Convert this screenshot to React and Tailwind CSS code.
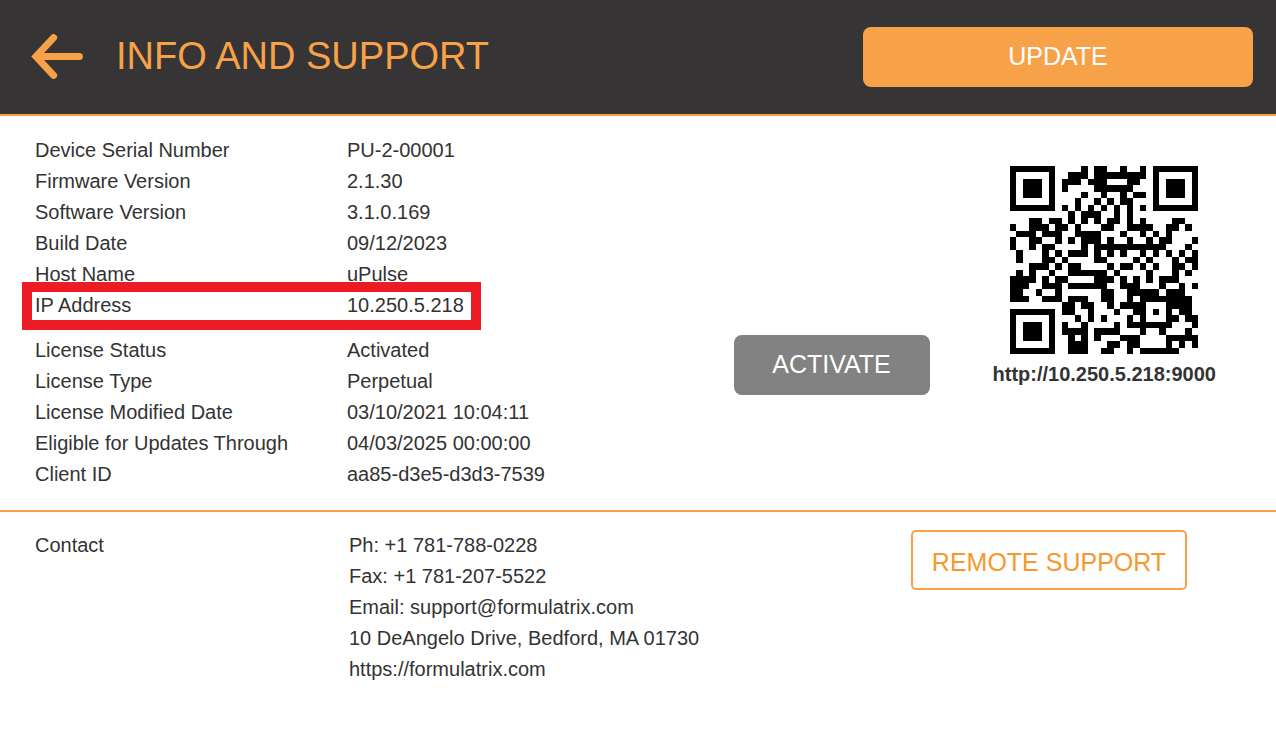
import clsx from 'clsx'

const DEVICE_URL = 'http://10.250.5.218:9000'

const deviceInfo = [
  ['Device Serial Number', 'PU-2-00001'],
  ['Firmware Version', '2.1.30'],
  ['Software Version', '3.1.0.169'],
  ['Build Date', '09/12/2023'],
  ['Host Name', 'uPulse'],
  ['IP Address', '10.250.5.218'],
]

const licenseInfo = [
  ['License Status', 'Activated'],
  ['License Type', 'Perpetual'],
  ['License Modified Date', '03/10/2021 10:04:11'],
  ['Eligible for Updates Through', '04/03/2025 00:00:00'],
  ['Client ID', 'aa85-d3e5-d3d3-7539'],
]

// QR code, version 3, error correction H, mask 6 (holds exactly 24 bytes)
const QR_SIZE = 29
const QR_FORMAT = 0b000110100001100

const gfMul = (a, b) => {
  let z = 0
  for (let i = 7; i >= 0; i--) {
    z = (z << 1) ^ ((z >>> 7) * 0x11d)
    z ^= ((b >>> i) & 1) * a
  }
  return z
}

const errorCodewords = (data, degree) => {
  const divisor = Array(degree).fill(0)
  divisor[degree - 1] = 1
  let root = 1
  for (let i = 0; i < degree; i++) {
    for (let j = 0; j < degree; j++) {
      divisor[j] = gfMul(divisor[j], root)
      if (j + 1 < degree) divisor[j] ^= divisor[j + 1]
    }
    root = gfMul(root, 2)
  }
  const result = Array(degree).fill(0)
  data.forEach((byte) => {
    const factor = byte ^ result.shift()
    result.push(0)
    divisor.forEach((d, i) => { result[i] ^= gfMul(d, factor) })
  })
  return result
}

const makeQr = (text) => {
  const toBits = (n, length) => n.toString(2).padStart(length, '0')
  const stream = '0100' + toBits(text.length, 8) + [...text].map((c) => toBits(c.charCodeAt(0), 8)).join('') + '0000'
  const data = stream.match(/.{8}/g).map((b) => parseInt(b, 2))
  const blocks = [data.slice(0, 13), data.slice(13)]
  const ecc = blocks.map((b) => errorCodewords(b, 22))
  const interleave = ([a, b]) => a.flatMap((v, i) => [v, b[i]])
  const bits = [...interleave(blocks), ...interleave(ecc)].map((v) => toBits(v, 8)).join('')

  const grid = Array.from({ length: QR_SIZE }, () => Array(QR_SIZE).fill(null))
  const set = (x, y, dark) => {
    if (x >= 0 && y >= 0 && x < QR_SIZE && y < QR_SIZE) grid[y][x] = Boolean(dark)
  }

  for (let i = 0; i < QR_SIZE; i++) {
    set(6, i, i % 2 === 0)
    set(i, 6, i % 2 === 0)
  }
  const finders = [[3, 3], [QR_SIZE - 4, 3], [3, QR_SIZE - 4]]
  finders.forEach(([cx, cy]) => {
    for (let dy = -4; dy <= 4; dy++) {
      for (let dx = -4; dx <= 4; dx++) {
        const dist = Math.max(Math.abs(dx), Math.abs(dy))
        set(cx + dx, cy + dy, dist !== 2 && dist !== 4)
      }
    }
  })
  for (let dy = -2; dy <= 2; dy++) {
    for (let dx = -2; dx <= 2; dx++) {
      set(22 + dx, 22 + dy, Math.max(Math.abs(dx), Math.abs(dy)) !== 1)
    }
  }

  const format = (i) => (QR_FORMAT >>> i) & 1
  for (let i = 0; i <= 5; i++) set(8, i, format(i))
  set(8, 7, format(6))
  set(8, 8, format(7))
  set(7, 8, format(8))
  for (let i = 9; i < 15; i++) set(14 - i, 8, format(i))
  for (let i = 0; i < 8; i++) set(QR_SIZE - 1 - i, 8, format(i))
  for (let i = 8; i < 15; i++) set(8, QR_SIZE - 15 + i, format(i))
  set(8, QR_SIZE - 8, true)

  let index = 0
  for (let right = QR_SIZE - 1; right >= 1; right -= 2) {
    if (right === 6) right = 5
    const upward = ((right + 1) & 2) === 0
    for (let v = 0; v < QR_SIZE; v++) {
      for (let j = 0; j < 2; j++) {
        const x = right - j
        const y = upward ? QR_SIZE - 1 - v : v
        if (grid[y][x] !== null) continue
        const masked = (((x * y) % 2) + ((x * y) % 3)) % 2 === 0
        grid[y][x] = (bits[index] === '1') !== masked
        index++
      }
    }
  }
  return grid
}

const QrCode = ({ value }) => {
  const path = makeQr(value)
    .flatMap((row, y) => row.map((dark, x) => (dark ? `M${x} ${y}h1v1h-1z` : '')))
    .join('')

  return (
    <svg className="h-[188px] w-[188px]" viewBox="0 0 29 29" shapeRendering="crispEdges" role="img" aria-label={value}>
      <path d={path} fill="#000" />
    </svg>
  )
}

const InfoTable = ({ rows, highlight, className }) => (
  <table className={clsx('self-start justify-self-start text-left', className)}>
    <tbody>
      {rows.map(([label, value]) => (
        <tr key={label}>
          <th scope="row" className="relative w-[312px] p-0 font-normal">
            {label}
            {label === highlight && (
              <span className="pointer-events-none absolute -top-2 -left-[13px] h-12 w-[459px] border-[10px] border-[#ed1c24]" />
            )}
          </th>
          <td className="p-0 whitespace-nowrap">{value}</td>
        </tr>
      ))}
    </tbody>
  </table>
)

const App = () => {
  return (
    <div className="min-h-screen bg-white font-['Liberation_Sans',Arial,sans-serif] text-[20px] leading-[31px] text-[#333333]">
      <header className="flex items-center border-b-2 border-[#f7a248] bg-[#373435] py-[27px] pr-[23px] pl-[30px]">
        <button type="button" aria-label="Back" className="shrink-0">
          <svg className="h-[46px] w-[54px]" viewBox="0 0 54 46" fill="none" stroke="#f7a248" strokeWidth="7" strokeLinecap="round">
            <path d="M23.6 3.6 6 22.5 23.6 41.4" />
            <path d="M8 22.5H49.4" />
          </svg>
        </button>
        <h1 className="ml-8 pb-0.5 text-[38px] leading-[58px] whitespace-nowrap text-[#f7a248]">INFO AND SUPPORT</h1>
        <button type="button" className="ml-auto h-[60px] w-[390px] rounded-lg bg-[#f7a248] pb-0.5 text-[25px] text-white">
          UPDATE
        </button>
      </header>

      <main>
        <section className="grid grid-cols-[1fr_auto_auto] grid-rows-[auto_1fr] gap-y-[14px] border-b-2 border-[#f7a248] pt-[19px] pr-[60px] pb-5 pl-[35px]">
          <InfoTable rows={deviceInfo} highlight="IP Address" />
          <InfoTable rows={licenseInfo} className="col-start-1 row-start-2" />
          <button type="button" className="col-start-2 row-start-2 h-[60px] w-[196px] rounded-lg bg-[#828282] pb-0.5 text-[25px] text-white">
            ACTIVATE
          </button>
          <div className="col-start-3 row-span-2 row-start-1 ml-[63px] flex flex-col items-center pt-[31px]">
            <QrCode value={DEVICE_URL} />
            <p className="mt-[5px] font-bold">{DEVICE_URL}</p>
          </div>
        </section>

        <section className="flex items-start pt-[18px] pr-[89px] pb-5 pl-[35px]">
          <h2 className="w-[314px]">Contact</h2>
          <address className="not-italic">
            <p>Ph: +1 781-788-0228</p>
            <p>Fax: +1 781-207-5522</p>
            <p>Email: support@formulatrix.com</p>
            <p>10 DeAngelo Drive, Bedford, MA 01730</p>
            <a href="https://formulatrix.com">https://formulatrix.com</a>
          </address>
          <button type="button" className="ml-auto h-[60px] w-[276px] rounded-[5px] border-2 border-[#f7a248] pt-1 text-[25px] text-[#f7982d]">
            REMOTE SUPPORT
          </button>
        </section>
      </main>
    </div>
  )
}

export default App
